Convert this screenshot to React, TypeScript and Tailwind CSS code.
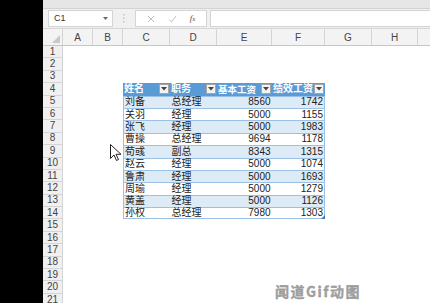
import React from 'react';

const cols = [
  { name: 'A', w: 30 },
  { name: 'B', w: 30 },
  { name: 'C', w: 47 },
  { name: 'D', w: 47 },
  { name: 'E', w: 55 },
  { name: 'F', w: 53 },
  { name: 'G', w: 47 },
  { name: 'H', w: 46 },
  { name: '', w: 40 },
];

const rows: [string, string, number, number][] = [
  ['刘备', '总经理', 8560, 1742],
  ['关羽', '经理', 5000, 1155],
  ['张飞', '经理', 5000, 1983],
  ['曹操', '总经理', 9694, 1178],
  ['荀彧', '副总', 8343, 1315],
  ['赵云', '经理', 5000, 1074],
  ['鲁肃', '经理', 5000, 1693],
  ['周瑜', '经理', 5000, 1279],
  ['黄盖', '经理', 5000, 1126],
  ['孙权', '总经理', 7980, 1303],
];

const headers = ['姓名', '职务', '基本工资', '绩效工资'];

// small filter button in the table header
const FilterBtn: React.FC = () => (
  <span className="ml-auto w-[10px] h-[10px] bg-[#f3f3f3] border border-[#a6a6a6] flex items-center justify-center shrink-0">
    <svg width="6" height="4" viewBox="0 0 6 4">
      <path d="M0 0h6L3 3.5z" fill="#444" />
    </svg>
  </span>
);

const Cursor: React.FC = () => (
  <svg className="absolute left-[110px] top-[144px]" width="12" height="18" viewBox="0 0 12 18">
    <path d="M0.5 0.5v14l3.5-3.5 2.5 5.5 2-1-2.5-5.2h5z" fill="#fff" stroke="#222" strokeWidth="1" />
  </svg>
);

const App: React.FC = () => {
  const rowH = 'h-[12.4px]';
  return (
    <div className="relative w-[430px] h-[303px] overflow-hidden flex bg-white" style={{ fontFamily: '"Liberation Sans", "Noto Sans CJK SC", sans-serif' }}>
      <div className="w-[43px] shrink-0 bg-black" />
      <div className="flex-1 flex flex-col min-w-0">
        {/* ribbon edge */}
        <div className="h-[9px] bg-[#e6e6e6] border-b border-[#d2d2d2] shrink-0" />
        {/* formula bar */}
        <div className="h-[20px] bg-[#f0f0f0] flex items-center shrink-0 border-b border-[#d6d6d6]">
          <div className="ml-[5px] w-[65px] h-[17px] bg-white border border-[#d4d4d4] flex items-center pl-[5px] pr-[4px] text-[9px] text-[#333]">
            C1
            <svg className="ml-auto" width="5" height="3" viewBox="0 0 5 3"><path d="M0 0h5L2.5 3z" fill="#666" /></svg>
          </div>
          <div className="w-[22px] flex justify-center">
            <svg width="2" height="9" viewBox="0 0 2 9">
              <rect x="0" y="0" width="1.5" height="1.5" fill="#c4c4c4" />
              <rect x="0" y="3.5" width="1.5" height="1.5" fill="#c4c4c4" />
              <rect x="0" y="7" width="1.5" height="1.5" fill="#c4c4c4" />
            </svg>
          </div>
          <div className="w-[72px] h-[17px] bg-white border border-[#d4d4d4] flex items-center justify-around px-[4px]">
            <svg width="8" height="8" viewBox="0 0 8 8"><path d="M1 1l6 6M7 1l-6 6" stroke="#c0c0c0" strokeWidth="1" /></svg>
            <svg width="9" height="8" viewBox="0 0 9 8"><path d="M1 4.5l2.5 2.5 4.5-6" stroke="#c0c0c0" strokeWidth="1" fill="none" /></svg>
            <span className="text-[9px] italic text-[#555]" style={{ fontFamily: '"Liberation Serif", serif' }}>f<span className="text-[7px]">x</span></span>
          </div>
          <div className="ml-[3px] flex-1 h-[17px] bg-white border-l border-y border-[#d4d4d4]" />
        </div>
        {/* column headers */}
        <div className="h-[17px] flex shrink-0 bg-[#f3f3f3] border-b border-[#c6c6c6]">
          <div className="w-[20px] shrink-0 border-r border-[#d4d4d4] flex items-end justify-end p-[2px]">
            <svg width="8" height="8" viewBox="0 0 8 8"><path d="M8 0v8H0z" fill="#c8c8c8" /></svg>
          </div>
          {cols.map((c, i) => (
            <div key={i} className="shrink-0 border-r border-[#d4d4d4] flex items-center justify-center text-[10px] text-[#444]" style={{ width: c.w }}>
              {c.name}
            </div>
          ))}
        </div>
        {/* sheet */}
        <div className="flex flex-col">
          {Array.from({ length: 21 }).map((_, r) => {
            const rowNo = r + 1;
            const dataIdx = rowNo - 5;
            const isHeader = rowNo === 4;
            const item = dataIdx >= 0 && dataIdx < rows.length ? rows[dataIdx] : null;
            const band = item && dataIdx % 2 === 0 ? 'bg-[#ddebf7]' : 'bg-white';
            return (
              <div key={r} className={`flex shrink-0 ${rowH}`}>
                <div className="w-[20px] shrink-0 bg-[#f0f0f0] border-r border-b border-[#d4d4d4] flex items-center justify-center text-[10px] text-[#444] leading-none">
                  {rowNo}
                </div>
                <div className="w-[60px] shrink-0" />
                {isHeader && (
                  <div className="flex w-[202px] bg-[#5b9bd5] text-white text-[10px] font-bold leading-none">
                    {headers.map((h, i) => (
                      <div key={i} className="flex items-center pl-[1px] pr-[1px]" style={{ width: cols[i + 2].w }}>
                        <span className={i === 2 ? 'text-[9.5px]' : ''}>{h}</span>
                        <FilterBtn />
                      </div>
                    ))}
                  </div>
                )}
                {item && (
                  <div className={`relative flex w-[202px] ${band} border-x border-t border-[#9bc2e6] text-[10px] text-[#222] leading-none ${dataIdx === rows.length - 1 ? 'border-b' : ''}`}>
                    <div className="w-[47px] flex items-center pl-[1px]">{item[0]}</div>
                    <div className="w-[47px] flex items-center pl-[1px]">{item[1]}</div>
                    <div className="w-[55px] flex items-center justify-end pr-[1px]">{item[2]}</div>
                    <div className="w-[53px] flex items-center justify-end pr-[1px]">{item[3]}</div>
                    {dataIdx === rows.length - 1 && (
                      <svg className="absolute right-[-1px] bottom-[-1px]" width="4" height="4" viewBox="0 0 4 4"><path d="M4 0v4H0z" fill="#4a78b8" /></svg>
                    )}
                  </div>
                )}
              </div>
            );
          })}
        </div>
      </div>
      <Cursor />
      <div
        className="absolute left-[275px] top-[281px] text-[14px] text-[#a3a3a3] font-bold tracking-[1.5px]"
        style={{ fontFamily: '"Noto Sans CJK SC", sans-serif', WebkitTextStroke: '0.3px #8a8a8a', textShadow: '1px 1px 0 #fff, -1px -1px 0 #fff, 1px -1px 0 #fff, -1px 1px 0 #fff' }}
      >
        闻道Gif动图
      </div>
    </div>
  );
};

export default App;
